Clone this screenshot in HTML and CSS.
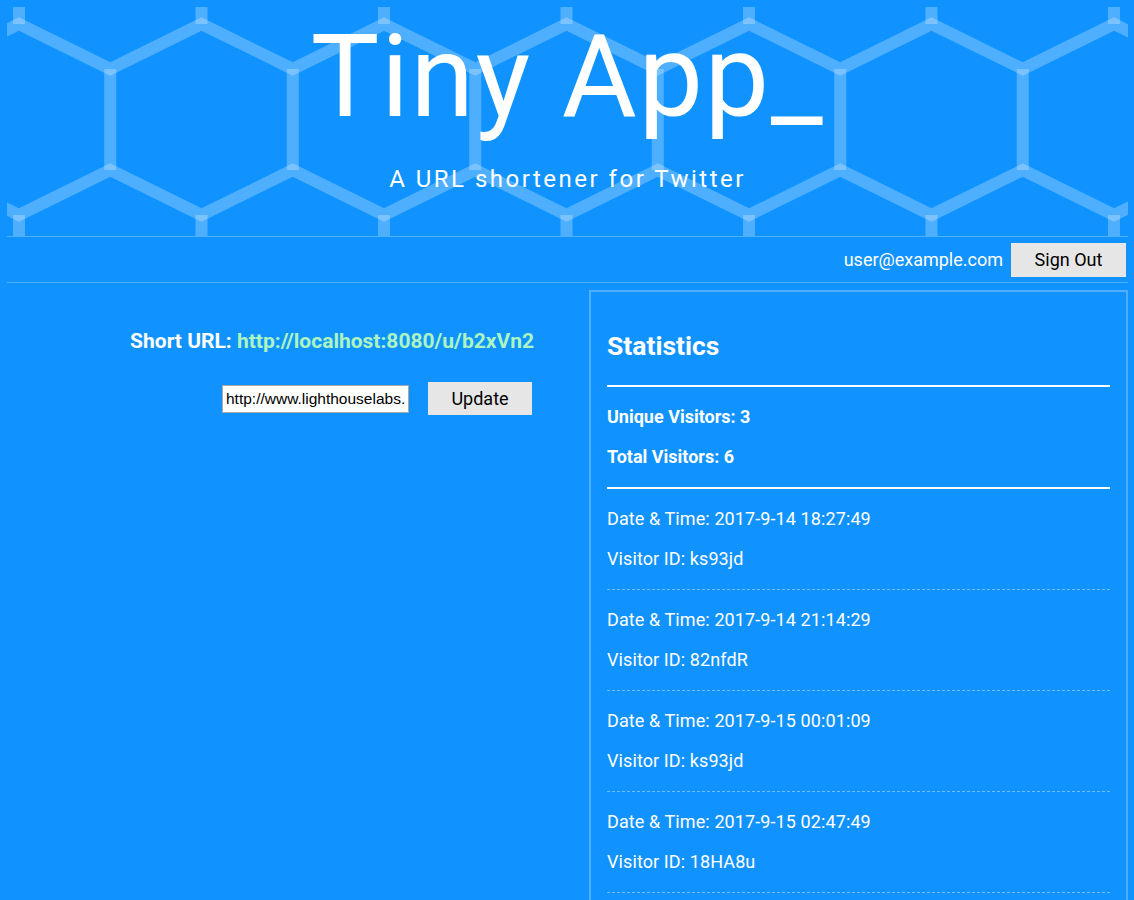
FILE: index.html
```html
<!DOCTYPE html>
<html lang="en">
<head>
<meta charset="utf-8">
<title>Tiny App</title>
<link rel="stylesheet" href="styles.css">
</head>
<body>
<div class="page">
  <header class="hero">
    <svg class="hex" viewBox="7 7 1121 229" width="1121" height="229" aria-hidden="true">
      <g fill="none" stroke="rgba(255,255,255,0.26)" stroke-width="12" stroke-linejoin="miter">
        <polyline points="-72.25,69 19,24 110.25,69 201.5,24 292.75,69 384,24 475.25,69 566.5,24 657.75,69 749,24 840.25,69 931.5,24 1022.75,69 1114,24 1205.25,69"/>
        <polyline points="-72.25,170 19,215 110.25,170 201.5,215 292.75,170 384,215 475.25,170 566.5,215 657.75,170 749,215 840.25,170 931.5,215 1022.75,170 1114,215 1205.25,170"/>
        <path d="M110.25 69V170M292.75 69V170M475.25 69V170M657.75 69V170M840.25 69V170M1022.75 69V170"/>
        <path d="M19 0V24M201.5 0V24M384 0V24M566.5 0V24M749 0V24M931.5 0V24M1114 0V24"/>
        <path d="M19 215V240M201.5 215V240M384 215V240M566.5 215V240M749 215V240M931.5 215V240M1114 215V240"/>
      </g>
    </svg>
    <div class="hero-text">
      <h1 class="title">Tiny App_</h1>
      <p class="tagline">A URL shortener for Twitter</p>
    </div>
  </header>

  <nav class="userbar">
    <span class="email">user@example.com</span>
    <button class="btn btn-signout" type="button">Sign Out</button>
  </nav>

  <main class="main">
    <section class="edit">
      <p class="short">Short URL: <a class="short-link" href="#">http://localhost:8080/u/b2xVn2</a></p>
      <form class="update-form">
        <input class="url-input" type="text" value="http://www.lighthouselabs.ca">
        <button class="btn btn-update" type="button">Update</button>
      </form>
    </section>

    <aside class="stats">
      <h2 class="stats-title">Statistics</h2>
      <div class="summary">
        <p class="line strong">Unique Visitors: 3</p>
        <p class="line strong">Total Visitors: 6</p>
      </div>
      <div class="visit">
        <p class="line">Date &amp; Time: 2017-9-14 18:27:49</p>
        <p class="line">Visitor ID: ks93jd</p>
      </div>
      <div class="visit">
        <p class="line">Date &amp; Time: 2017-9-14 21:14:29</p>
        <p class="line">Visitor ID: 82nfdR</p>
      </div>
      <div class="visit">
        <p class="line">Date &amp; Time: 2017-9-15 00:01:09</p>
        <p class="line">Visitor ID: ks93jd</p>
      </div>
      <div class="visit">
        <p class="line">Date &amp; Time: 2017-9-15 02:47:49</p>
        <p class="line">Visitor ID: 18HA8u</p>
      </div>
    </aside>
  </main>
</div>
</body>
</html>
```

FILE: styles.css
```css
html, body {
  margin: 0;
  padding: 0;
  background: #1193ff;
}

body {
  font-family: Roboto, "Noto Sans", sans-serif;
  color: #ffffff;
}

.page {
  padding: 7px 6px 0 7px;
}

/* ---------- hero ---------- */
.hero {
  display: grid;
  height: 229px;
  border-bottom: 1px solid rgba(255, 255, 255, 0.26);
  overflow: hidden;
}

.hex,
.hero-text {
  grid-area: 1 / 1;
}

.hex {
  display: block;
}

.hero-text {
  display: flex;
  flex-direction: column;
  align-items: center;
  padding: 12px 0 0 0;
}

.title {
  margin: 0;
  font-size: 115px;
  line-height: 115px;
  font-weight: 400;
  letter-spacing: 1.6px;
}

.tagline {
  margin: 30px 0 0;
  font-size: 24px;
  line-height: 30px;
  letter-spacing: 2.5px;
}

/* ---------- user bar ---------- */
.userbar {
  display: flex;
  justify-content: flex-end;
  align-items: center;
  gap: 8px;
  height: 45px;
  padding-right: 2px;
  border-bottom: 1px solid rgba(255, 255, 255, 0.26);
}

.email {
  font-size: 18px;
}

.btn {
  border: none;
  background: #e6e6e6;
  color: #000;
  font-family: Roboto, "Noto Sans", sans-serif;
  font-size: 18px;
  padding: 0;
  cursor: pointer;
}

.btn-signout {
  width: 115px;
  height: 34px;
}

/* ---------- main ---------- */
.main {
  display: grid;
  grid-template-columns: 582px 539px;
  margin-top: 7px;
}

.edit {
  padding-right: 55px;
  text-align: right;
}

.short {
  margin: 39px 0 0;
  font-size: 21px;
  line-height: 24px;
  font-weight: 700;
}

.short-link {
  color: #acf5bf;
  text-decoration: none;
}

.update-form {
  display: flex;
  justify-content: flex-end;
  align-items: center;
  gap: 19px;
  margin: 29px 2px 0 0;
}

.url-input {
  box-sizing: border-box;
  width: 187px;
  height: 28px;
  border: 1px solid #a9a9a9;
  padding: 0 3px;
  font-family: "Liberation Sans", Arial, sans-serif;
  font-size: 15.5px;
  color: #000;
  background: #fff;
}

.btn-update {
  width: 104px;
  height: 33px;
}

/* ---------- stats ---------- */
.stats {
  border: 2px solid rgba(255, 255, 255, 0.26);
  padding: 0 16px 20px;
}

.stats-title {
  margin: 0;
  padding: 38px 0 23px;
  font-size: 26.5px;
  line-height: 32px;
  font-weight: 700;
  border-bottom: 2px solid #ffffff;
}

.summary,
.visit {
  display: flex;
  flex-direction: column;
  gap: 18px;
  padding: 19px 0;
}

.summary {
  border-bottom: 2px solid #ffffff;
}

.visit {
  border-bottom: 1px dashed rgba(255, 255, 255, 0.4);
}

.line {
  margin: 0;
  font-size: 18px;
  line-height: 22px;
  letter-spacing: 0.1px;
}

.strong {
  font-weight: 700;
  letter-spacing: 0;
}
```
